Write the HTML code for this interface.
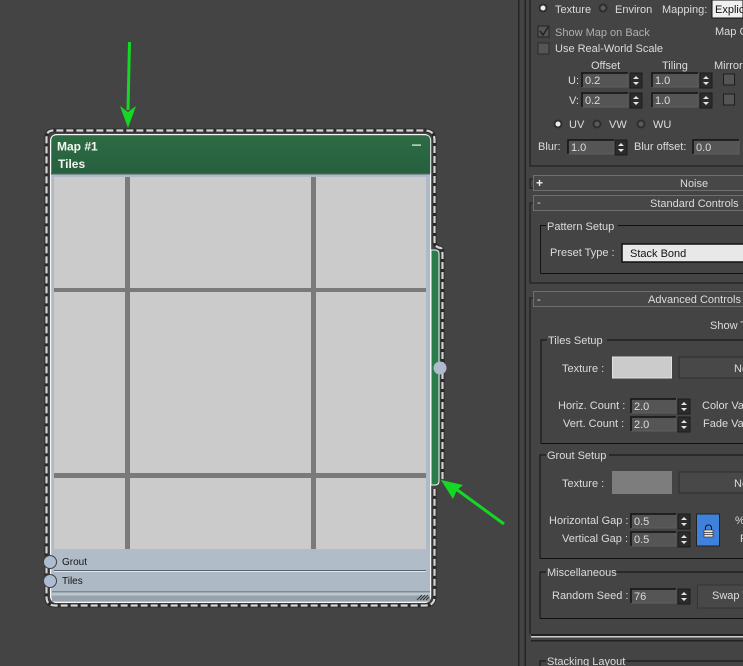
<!DOCTYPE html>
<html><head><meta charset="utf-8"><style>
html,body{margin:0;padding:0;background:#444;width:743px;height:666px;overflow:hidden}
svg{display:block}
text{font-family:"Liberation Sans",sans-serif;font-size:11px;fill:#dcdcdc}
.k{fill:#111}
.inp{fill:#555;stroke:#5e5e5e}
.r0{fill:#2e2e2e}
.r1{fill:#5a5a5a}
</style></head><body>
<svg width="743" height="666" viewBox="0 0 743 666" xmlns="http://www.w3.org/2000/svg">
<defs>
<linearGradient id="g" x1="0" y1="0" x2="0" y2="1"><stop offset="0" stop-color="#2d6b43"/><stop offset="1" stop-color="#27603f"/></linearGradient>
<g id="sp"><rect x="0" y="0" width="12" height="15" fill="#2c2c2c" stroke="#1c1c1c"/><path d="M3 6 L6 3 L9 6Z M3 9 L9 9 L6 12Z" fill="#e4e4e4"/></g>
</defs>
<rect width="743" height="666" fill="#444"/>

<!-- node -->
<path d="M431 250 h4 q4 0 4 4 v227 q0 4 -4 4 h-4Z" fill="#2a7d4b" stroke="#f4f4f4" stroke-width="1"/>
<rect x="50.600" y="134.600" width="380" height="467.800" rx="6" fill="#aebbc7" stroke="#f6f6f6" stroke-width="1.200"/>
<path d="M51.300 173 V141 q0 -5.700 5.700 -5.700 H424.500 q5.700 0 5.700 5.700 V173Z" fill="url(#g)"/>
<rect x="51" y="173" width="379" height="1.500" fill="#4d6058"/>
<rect x="54" y="177" width="372" height="372" fill="#cbcbcb"/>
<rect x="125" y="177" width="5" height="372" fill="#7a7a7a"/>
<rect x="311" y="177" width="5" height="372" fill="#7a7a7a"/>
<rect x="54" y="288" width="372" height="4" fill="#7a7a7a"/>
<rect x="54" y="473" width="372" height="5" fill="#7a7a7a"/>
<rect x="52" y="549" width="378" height="21" fill="#b0bcc7"/>
<rect x="54" y="570" width="372" height="1" fill="#566370"/>
<rect x="54" y="571" width="372" height="1" fill="#dfe6ea"/>
<rect x="52" y="572" width="378" height="19" fill="#adb9c4"/>
<rect x="52" y="591" width="378" height="1.500" fill="#7f8993"/>
<rect x="52" y="592.500" width="378" height="3" fill="#bcc6cf"/>
<rect x="52" y="595.500" width="378" height="6" fill="#98a2ac"/>
<path d="M417 600 l5 -5 M420 600 l5 -5 M423 600 l5 -5 M426 600 l3 -3" stroke="#333" stroke-width="1" fill="none"/>
<rect x="412" y="144.500" width="9" height="1.200" fill="#e8f4ea"/>
<text x="57" y="150.500" style="font-weight:bold;font-size:12px;fill:#f2f6f0">Map #1</text>
<text x="58" y="168" style="font-weight:bold;font-size:12px;fill:#f2f6f0">Tiles</text>
<text x="62" y="565" style="font-size:10px;fill:#161616">Grout</text>
<text x="62" y="584" style="font-size:10px;fill:#161616">Tiles</text>
<path d="M442.500 479 V256 Q442.500 249 441 248 Q434.500 247.500 434.500 241 V140 Q434.500 130.500 425 130.500 H53 Q46.500 130.500 46.500 138 V597 Q46.500 605.500 55 605.500 H425 Q434.500 605.500 434.500 597 V489" fill="none" stroke="#2a2a2a" stroke-width="4"/>
<path d="M442.500 479 V256 Q442.500 249 441 248 Q434.500 247.500 434.500 241 V140 Q434.500 130.500 425 130.500 H53 Q46.500 130.500 46.500 138 V597 Q46.500 605.500 55 605.500 H425 Q434.500 605.500 434.500 597 V489" fill="none" stroke="#d4d4d4" stroke-width="2.200" stroke-dasharray="7 3"/>
<circle cx="50" cy="562" r="6.500" fill="#aebcd0" stroke="#3d4046"/>
<circle cx="50" cy="581" r="6.500" fill="#aebcd0" stroke="#3d4046"/>
<circle cx="440" cy="368" r="6.500" fill="#b0bace"/>

<!-- green arrows -->
<path d="M129.500 42 L128 110" stroke="#14d824" stroke-width="3" fill="none"/>
<path d="M120 106 L128 112 L136 106 L128 128Z" fill="#14d824"/>
<path d="M504 524 L456 489" stroke="#14d824" stroke-width="3" fill="none"/>
<path d="M441 480 L463 485 L457 490 L453 499Z" fill="#14d824"/>

<!-- panel frame -->
<rect x="518" y="0" width="1.500" height="666" fill="#232323"/>
<rect x="524.500" y="0" width="1.500" height="666" fill="#232323"/>
<path d="M530 0 V166 H743 M533 179 H530 V188 H533 M533 203 H530 V283 H743 M533 298 H530 V634" stroke="#232323" stroke-width="1.300" fill="none"/>
<rect x="531" y="634" width="212" height="2" fill="#222"/>
<rect x="531" y="636" width="212" height="1.500" fill="#cfcfcf"/>
<rect x="531" y="640" width="212" height="1.500" fill="#222"/>

<!-- coordinates -->
<circle cx="543" cy="8" r="4.500" class="r0"/><circle cx="543" cy="8" r="2.500" fill="#eee"/>
<text x="555" y="13">Texture</text>
<circle cx="603" cy="8" r="4.500" class="r0"/><circle cx="603" cy="8" r="2.500" class="r1"/>
<text x="615" y="13">Environ</text>
<text x="662" y="13">Mapping:</text>
<rect x="712" y="0" width="31" height="18" fill="#efefef" stroke="#111"/>
<text x="715" y="13" class="k">Explicit</text>
<rect x="538" y="26" width="11" height="11" fill="#555" stroke="#222"/><path d="M540 31 l3 4 l5 -8" stroke="#222" stroke-width="1.500" fill="none"/>
<text x="555" y="36" style="fill:#b0b0b0">Show Map on Back</text>
<text x="715" y="35">Map C</text>
<rect x="538" y="43" width="11" height="11" fill="#555" stroke="#2a2a2a"/>
<text x="555" y="52">Use Real-World Scale</text>
<text x="591" y="69">Offset</text><text x="662" y="69">Tiling</text><text x="714" y="69">Mirror</text>
<text x="568" y="84">U:</text><text x="569" y="104">V:</text>
<g>
<rect x="582" y="73" width="46" height="14" class="inp"/><path d="M582 87V73H628" stroke="#111" fill="none" stroke-width="1.500"/><text x="585" y="84">0.2</text><use href="#sp" x="630" y="73"/>
<rect x="652" y="73" width="46" height="14" class="inp"/><path d="M652 87V73H698" stroke="#111" fill="none" stroke-width="1.500"/><text x="655" y="84">1.0</text><use href="#sp" x="700" y="73"/>
<rect x="582" y="93" width="46" height="14" class="inp"/><path d="M582 107V93H628" stroke="#111" fill="none" stroke-width="1.500"/><text x="585" y="104">0.2</text><use href="#sp" x="630" y="93"/>
<rect x="652" y="93" width="46" height="14" class="inp"/><path d="M652 107V93H698" stroke="#111" fill="none" stroke-width="1.500"/><text x="655" y="104">1.0</text><use href="#sp" x="700" y="93"/>
</g>
<rect x="723.500" y="74" width="11" height="11" fill="#555" stroke="#1e1e1e"/>
<rect x="723.500" y="94" width="11" height="11" fill="#555" stroke="#1e1e1e"/>
<circle cx="558" cy="124" r="4.500" class="r0"/><circle cx="558" cy="124" r="2.500" fill="#eee"/>
<text x="569" y="128">UV</text>
<circle cx="597" cy="124" r="4.500" class="r0"/><circle cx="597" cy="124" r="2.500" class="r1"/>
<text x="609" y="128">VW</text>
<circle cx="641" cy="124" r="4.500" class="r0"/><circle cx="641" cy="124" r="2.500" class="r1"/>
<text x="653" y="128">WU</text>
<text x="538" y="150">Blur:</text>
<rect x="568" y="140" width="46" height="14" class="inp"/><path d="M568 154V140H614" stroke="#111" fill="none" stroke-width="1.500"/><text x="571" y="151">1.0</text><use href="#sp" x="615" y="140"/>
<text x="634" y="150">Blur offset:</text>
<rect x="693" y="140" width="46" height="14" class="inp"/><path d="M693 154V140H739" stroke="#111" fill="none" stroke-width="1.500"/><text x="696" y="151">0.0</text>

<!-- rollouts -->
<rect x="533.500" y="175.500" width="212" height="15" fill="#474747" stroke="#6f6f6f"/>
<text x="536" y="187" style="font-weight:bold;font-size:12px;fill:#eee">+</text>
<text x="680" y="187">Noise</text>
<rect x="533.500" y="195.500" width="212" height="15" fill="#474747" stroke="#6f6f6f"/>
<text x="537" y="206">-</text>
<text x="650" y="207">Standard Controls</text>
<path d="M540.500 273.500 V225.500 H546 M618 225.500 H743 M540.500 273.500 H743" stroke="#111" fill="none"/>
<text x="547" y="230">Pattern Setup</text>
<text x="550" y="256">Preset Type :</text>
<rect x="622" y="244" width="125" height="18" fill="#e8e8e8" stroke="#111" stroke-width="1.500"/>
<text x="630" y="257" class="k">Stack Bond</text>
<rect x="533.500" y="291.500" width="212" height="15" fill="#474747" stroke="#6f6f6f"/>
<text x="537" y="303">-</text>
<text x="648" y="303">Advanced Controls</text>
<text x="710" y="329">Show T</text>

<path d="M541 443.500 V340 H547 M607 340 H743 M541 443.500 H743" stroke="#111" fill="none"/>
<text x="548" y="344">Tiles Setup</text>
<text x="562" y="372">Texture :</text>
<rect x="612.500" y="357" width="59" height="21" fill="#cbcbcb" stroke="#e2e2e2"/>
<rect x="679" y="357" width="70" height="21" fill="#484848" stroke="#2e2e2e"/>
<text x="734" y="372">No</text>
<text x="558" y="409">Horiz. Count :</text>
<text x="563" y="427">Vert. Count :</text>
<rect x="631" y="399" width="45" height="14" class="inp"/><path d="M631 413V399H676" stroke="#111" fill="none" stroke-width="1.500"/><text x="634" y="410">2.0</text><use href="#sp" x="678" y="399"/>
<rect x="631" y="417" width="45" height="14" class="inp"/><path d="M631 431V417H676" stroke="#111" fill="none" stroke-width="1.500"/><text x="634" y="428">2.0</text><use href="#sp" x="678" y="417"/>
<text x="702" y="409">Color Var</text>
<text x="703" y="427">Fade Var</text>

<path d="M540 558.500 V455 H546 M609 455 H743 M540 558.500 H743" stroke="#111" fill="none"/>
<text x="547" y="459">Grout Setup</text>
<text x="562" y="487">Texture :</text>
<rect x="612" y="471" width="60" height="23" fill="#7d7d7d"/>
<rect x="679" y="472" width="70" height="21" fill="#484848" stroke="#2e2e2e"/>
<text x="734" y="487">No</text>
<text x="549" y="524">Horizontal Gap :</text>
<text x="562" y="542">Vertical Gap :</text>
<rect x="631" y="514" width="45" height="14" class="inp"/><path d="M631 528V514H676" stroke="#111" fill="none" stroke-width="1.500"/><text x="634" y="525">0.5</text><use href="#sp" x="678" y="514"/>
<rect x="631" y="532" width="45" height="14" class="inp"/><path d="M631 546V532H676" stroke="#111" fill="none" stroke-width="1.500"/><text x="634" y="543">0.5</text><use href="#sp" x="678" y="532"/>
<rect x="696.500" y="514" width="23" height="32" fill="#3f82dc" stroke="#222"/>
<path d="M705.500 530 v-2 q0 -3 3 -3 q3 0 3 3 v2" stroke="#111" fill="none"/>
<rect x="704" y="530" width="9" height="7" fill="#e8e8e8" stroke="#222" stroke-width=".6"/>
<path d="M704 532.500h9M704 534.500h9" stroke="#333" stroke-width=".7"/>
<text x="735" y="524">%</text><text x="740" y="542">F</text>

<path d="M540 618.500 V572 H546 M616 572 H743 M540 618.500 H743" stroke="#111" fill="none"/>
<text x="547" y="576">Miscellaneous</text>
<text x="552" y="599">Random Seed :</text>
<rect x="631" y="589" width="45" height="14" class="inp"/><path d="M631 603V589H676" stroke="#111" fill="none" stroke-width="1.500"/><text x="634" y="600">76</text><use href="#sp" x="678" y="589"/>
<rect x="697.500" y="585" width="60" height="23" fill="#484848" stroke="#333"/>
<text x="712" y="599">Swap T</text>
<path d="M540 666 V661 H546 M626 661 H743" stroke="#111" fill="none"/>
<text x="547" y="665">Stacking Layout</text>
</svg>
</body></html>
